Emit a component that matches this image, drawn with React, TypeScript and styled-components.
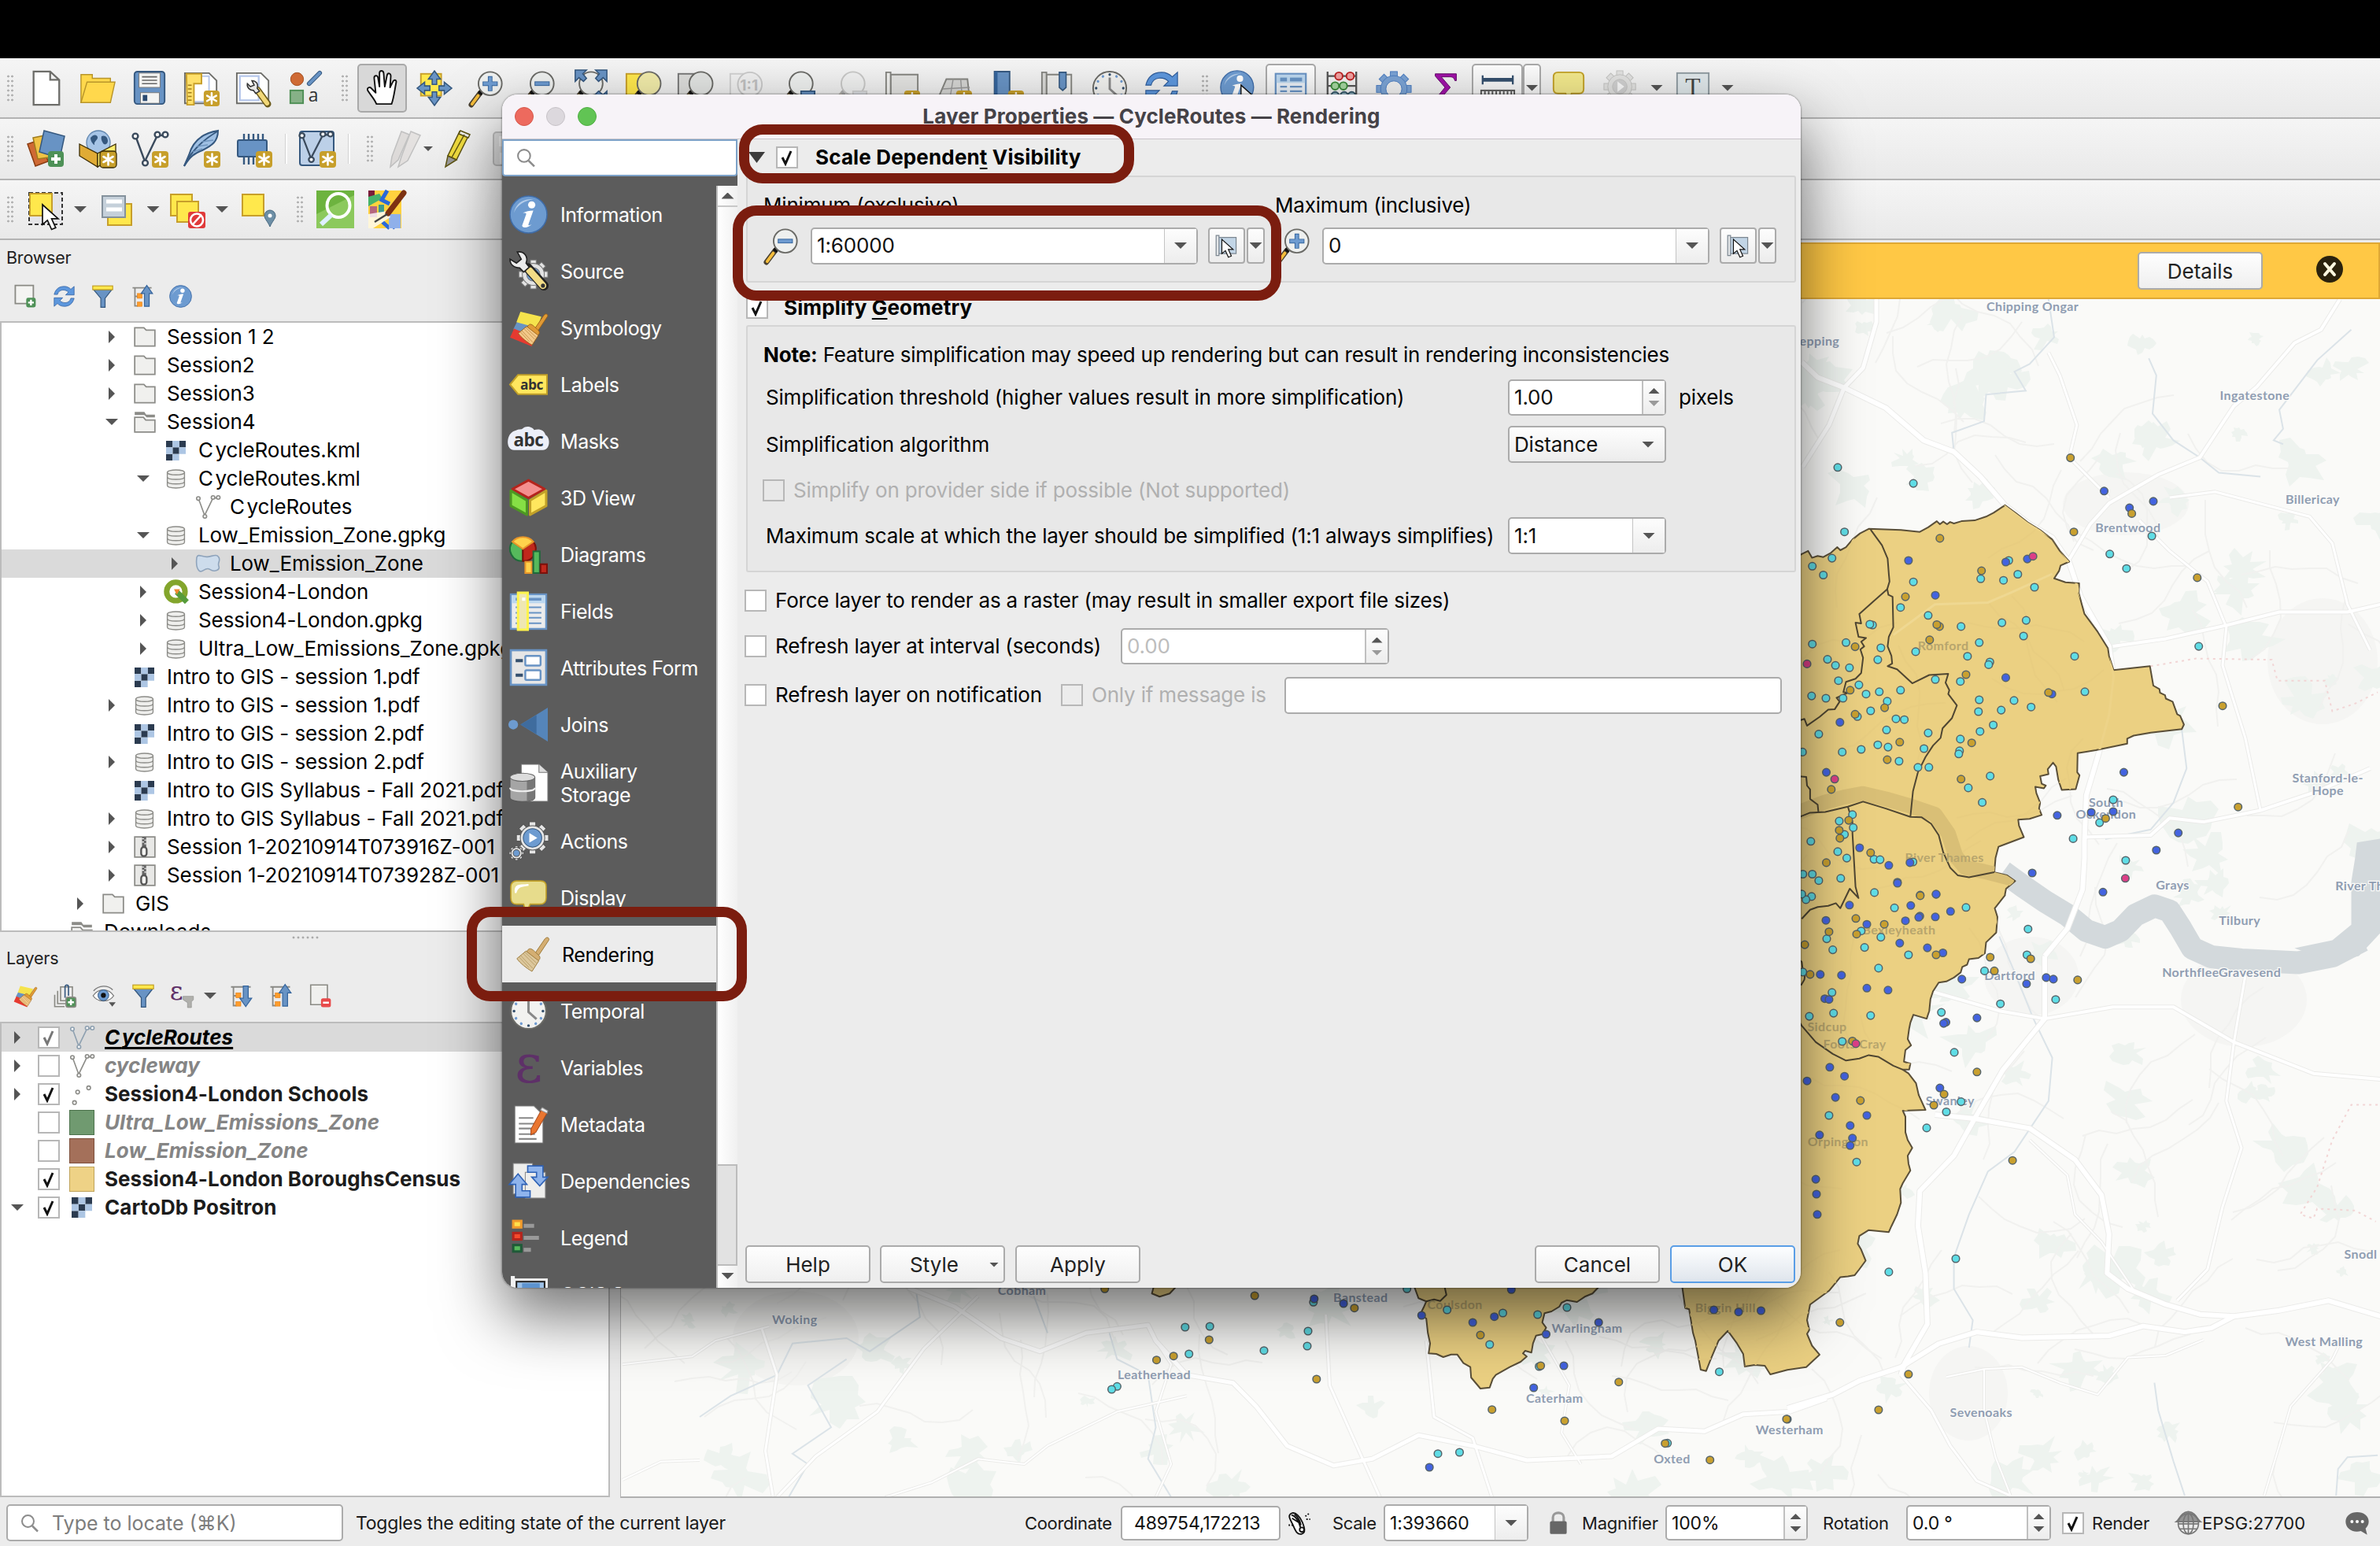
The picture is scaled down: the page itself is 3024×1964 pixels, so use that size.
import React from 'react';
import styled, { createGlobalStyle, css } from 'styled-components';

const Global = createGlobalStyle`
  html, body { margin: 0; padding: 0; background: #ececec; }
  * { box-sizing: border-box; }
  svg { display: block; flex: none; }
`;

const FONT = `Inter, "Liberation Sans", sans-serif`;

/* ------------------------------------------------------------------ */
/* Icons, all drawn on a 48 x 48 grid                                   */
/* ------------------------------------------------------------------ */

const Star = () => (
  <g>
    <rect x="27" y="27" width="21" height="21" rx="4" fill="#c79f2b" />
    <g stroke="#fff" strokeWidth="2.6" strokeLinecap="round">
      <path d="M37.5 30.5v14M31.4 34l12.2 7M31.4 41l12.2-7" />
    </g>
  </g>
);
const Plus = () => (
  <g>
    <rect x="27" y="27" width="20" height="20" rx="4" fill="#4e9157" />
    <path d="M37 31v12M31 37h12" stroke="#fff" strokeWidth="4" />
  </g>
);
const Lens = ({ fill = '#eef0ef', x = 0 }: { fill?: string; x?: number }) => (
  <g transform={`translate(${x} 0)`}>
    <path d="M16 30 4 46" stroke="#4b4130" strokeWidth="7" strokeLinecap="round" />
    <path d="M13 34 5 45" stroke="#f5bd3b" strokeWidth="4" strokeLinecap="round" />
    <path d="m19 26-4 6" stroke="#111" strokeWidth="6" />
    <circle cx="29" cy="18" r="15.5" fill={fill} stroke="#6a6a66" strokeWidth="2" />
  </g>
);
const Brush = ({ handle = '#e09a35', hair = '#f3c98a', line = '#9a5f14' }) => (
  <g stroke={line} strokeWidth="1">
    <path d="M29 23 42 4c3-4 7-1 5 2L33 27z" fill={handle} />
    <path d="M20 18c3-3 7 1 10 4s7 5 5 9l-3 3-15-12z" fill={handle} />
    <path d="m17 20 17 13-9 14C18 43 9 36 5 30z" fill={hair} />
    <path d="m13 23 16 16M10 26l16 17M8 28l13 14M15 21l16 15" fill="none" strokeOpacity=".55" />
  </g>
);
const Gear = ({ cx, cy, r, fill, stroke, inner }: { cx: number; cy: number; r: number; fill: string; stroke: string; inner: string }) => (
  <g transform={`translate(${cx} ${cy})`}>
    {Array.from({ length: 8 }, (_, i) => (
      <rect key={i} x={-r * 0.2} y={-r} width={r * 0.4} height={r * 0.5} fill={fill} stroke={stroke} transform={`rotate(${i * 45})`} />
    ))}
    <circle r={r * 0.76} fill={fill} stroke={stroke} />
    <circle r={r * 0.7} fill={fill} />
    <circle r={r * 0.46} fill={inner} stroke={stroke} />
  </g>
);
const Clock = () => (
  <g>
    <circle cx="24" cy="24" r="22" fill="#f2f2f0" stroke="#6a6a66" strokeWidth="2" />
    {Array.from({ length: 12 }, (_, i) => (
      <circle key={i} cx="24" cy="6" r="1.7" fill={i % 3 ? '#6f9bd1' : '#35506e'} transform={`rotate(${i * 30} 24 24)`} />
    ))}
    <path d="M24 10v15l10 9" fill="none" stroke="#888" strokeWidth="3" />
  </g>
);
const Info = () => (
  <g>
    <circle cx="24" cy="24" r="23" fill="#6d9bd0" stroke="#3f6ca8" strokeWidth="1.5" />
    <path d="M6 22C8 10 18 4 30 5 18 7 9 13 6 22z" fill="#b4cdea" />
    <circle cx="28" cy="12" r="4.5" fill="#fff" />
    <path d="M17 22c4-2 8-3 13-3l-6 17c-.6 2 1 2 4 0-3 4-11 6-12 2l5-14c.6-2-1-2-4-2z" fill="#fff" />
  </g>
);
const Refresh = () => (
  <g fill="#5d97dd" stroke="#2f5d9c" strokeWidth="1.2">
    <path d="M3 20C6 8 14 3 24 3c7 0 11 3 14 6l7-6v18H27l6-6c-6-6-20-7-23 5z" />
    <path d="M45 28C42 40 34 45 24 45c-7 0-11-3-14-6l-7 6V27h18l-6 6c6 6 20 7 23-5z" />
  </g>
);
const Cursor = ({ x = 0, y = 0, s = 1 }) => (
  <path transform={`translate(${x} ${y}) scale(${s})`} d="M0 0v24l6-5 5 11 5-2-5-11h8z" fill="#fff" stroke="#111" strokeWidth="1.6" />
);
const Poly = ({ c }: { c: string }) => (
  <g fill="none" stroke={c} strokeWidth="2.4">
    <path d="M7 10 18 40 34 7h8" />
    <g fill="#f6f6f6">
      <circle cx="6" cy="8" r="3.4" /><circle cx="18.5" cy="42" r="3.4" /><circle cx="34" cy="6" r="3.4" /><circle cx="44" cy="6" r="3.4" />
    </g>
  </g>
);
const Tree2 = () => (
  <g>
    <path d="M4 6h40M9 6v38h6M9 24h8" stroke="#8a8a86" strokeWidth="3" fill="none" />
    <rect x="14" y="18" width="10" height="10" fill="#ff9d2b" stroke="#e07a12" /><rect x="14" y="36" width="10" height="9" fill="#ff9d2b" stroke="#e07a12" />
  </g>
);
const Arrow = ({ d, c = '#35659d' }: { d: string; c?: string }) => <path d={d} fill="#6893c4" stroke={c} strokeWidth="2" />;
const Map2 = () => (
  <g>
    <path d="M6 6h38v34H6z" fill="#c2d5e6" stroke="#7c8791" strokeWidth="2" />
    <path d="M2 2h6v42H2z" fill="#e3e6e8" stroke="#7c8791" strokeWidth="2" />
  </g>
);

const GLYPHS: Record<string, React.ReactNode> = {
  doc: <path d="M8 2h22l12 11v33H8zM30 2v11h12" fill="#fff" stroke="#6d6d69" strokeWidth="2.4" />,
  folderOpen: (
    <g fill="#ffd84c" stroke="#b8952a" strokeWidth="1.5"><path d="M2 6h15v5h24v32H2z" /><path d="M10 16h37l-6 27H2z" /></g>
  ),
  save: (
    <g>
      <rect x="4" y="2" width="40" height="43" rx="4" fill="#6893c4" stroke="#35587f" strokeWidth="2" />
      <rect x="10" y="4" width="28" height="19" fill="#f4f4f2" stroke="#777" /><path d="M14 9h20M14 13.5h20M14 18h20" stroke="#666" strokeWidth="1.6" />
      <rect x="12" y="30" width="25" height="14" fill="#f4f4f2" stroke="#777" /><rect x="15" y="33" width="6" height="8" fill="#2a4a70" />
    </g>
  ),
  layoutNew: (
    <g>
      <path d="M2 4h32l10 10v30H2z" fill="#fff" stroke="#6d6d69" strokeWidth="2" />
      <path d="M20 8h14v34H14" fill="none" stroke="#b5c6ea" strokeWidth="2" />
      <path d="M4 5h20v13H14v28H5z" fill="#ffe06a" stroke="#c79f2b" strokeWidth="2" />
      <path d="M6 20h5M6 25h5M6 30h5M6 35h5M6 40h5" stroke="#a07c1c" strokeWidth="1.6" />
      <Star />
    </g>
  ),
  layoutMgr: (
    <g>
      <path d="M2 4h32l10 10v30H2z" fill="#fff" stroke="#6d6d69" strokeWidth="2" />
      <path d="M6 8h25v32H6z" fill="none" stroke="#b5c6ea" strokeWidth="2.4" />
      <path d="m29 26 14 19" stroke="#6b5a1a" strokeWidth="9" strokeLinecap="round" /><path d="m29 26 13 18" stroke="#f2d878" strokeWidth="6" strokeLinecap="round" />
      <path d="M22 14c5 0 9 4 7 10l3 4-5 3-3-4c-5 0-9-4-8-9l4 4 5-2z" fill="#e6e6e6" stroke="#333" strokeWidth="1.6" />
    </g>
  ),
  styleMgr: (
    <g>
      <circle cx="13" cy="12" r="8.5" fill="#cf6a34" stroke="#a04a1c" /><path d="M43 4 29 18" stroke="#35587f" strokeWidth="6" strokeLinecap="round" /><path d="M43 4 29 18" stroke="#6893c4" strokeWidth="4" strokeLinecap="round" />
      <rect x="4" y="27" width="17" height="17" fill="#86b187" stroke="#4e8f55" strokeWidth="2" />
      <text x="28" y="42" fontFamily="Open Sans" fontSize="24" fill="#333">a</text>
    </g>
  ),
  hand: (
    <path d="M16 45C13 38 8 33 5 28c-3-4 2-7 5-3l5 5-2-19c-.5-4 4-5 5-1l2 12V4c0-4 5-4 5.5 0L27 22l3-15c1-4 5-3 5 1l-1 15 4-8c2-3 5-2 4 2-2 10-3 20-6 28z" fill="#fff" stroke="#111" strokeWidth="2" strokeLinejoin="round" />
  ),
  panSel: (
    <g><rect x="6" y="5" width="27" height="29" fill="#ffe84c" stroke="#c79f2b" strokeWidth="2" />
      <g fill="#6893c4" stroke="#35587f" strokeWidth="1.6">
        <path d="m24 1 8 11h-5v7h-6v-7h-5zM24 47l8-11h-5v-7h-6v7h-5zM1 24l10-8v5h7v6h-7v5zM47 24l-10-8v5h-7v6h7v5z" />
      </g></g>
  ),
  zoomIn: <g><Lens /><path d="M29 8v20M19 18h20" stroke="#35659d" strokeWidth="6" /><path d="M29 9v18M20 18h18" stroke="#6d9bd0" strokeWidth="4" /></g>,
  zoomOut: <g><Lens /><path d="M19 18h20" stroke="#35659d" strokeWidth="6" /><path d="M20 18h18" stroke="#6d9bd0" strokeWidth="4" /></g>,
  zoomFull: (
    <g><Lens x={-4} /><g fill="#6893c4" stroke="#35587f" strokeWidth="1.6"><path d="M4 0h15l-5 5 5 6-4 4-6-5-5 5zM46 0H31l5 5-5 6 4 4 6-5 5 5zM46 44V28l-5 5-6-5-4 4 5 6-5 6z" /></g></g>
  ),
  zoomSel: <g><rect x="3" y="5" width="24" height="34" fill="#ffe84c" stroke="#c79f2b" strokeWidth="2" /><Lens fill="#f1eba9" x={4} /></g>,
  zoomLayer: <g><rect x="3" y="5" width="24" height="34" fill="#dcdcda" stroke="#777" strokeWidth="2" /><Lens fill="#e2e4e2" x={4} /></g>,
  zoom11: (
    <g opacity=".45"><rect x="3" y="5" width="30" height="30" fill="none" stroke="#aaa" strokeWidth="2" /><circle cx="29" cy="19" r="16" fill="#eee" stroke="#999" strokeWidth="2" /><text x="16" y="27" fontFamily="Inter" fontWeight="700" fontSize="20" fill="#888">1:1</text></g>
  ),
  zoomLast: <g><Lens x={-1} /><path d="M28 28h18v14H28z" fill="#6893c4" stroke="#35587f" strokeWidth="2" /></g>,
  zoomNext: <g opacity=".3"><Lens x={-1} /><path d="M28 28h18v14H28z" fill="#b5c0cc" stroke="#888" strokeWidth="2" /></g>,
  mapNew: <g><path d="M9 6h36v34H9z" fill="#e3e3e1" stroke="#858580" strokeWidth="2" /><path d="M3 3h6v40H3z" fill="#f0f0ee" stroke="#858580" strokeWidth="2" /><Star /></g>,
  map3d: <g><path d="M14 12h28l3 28-20-6-23 6z" fill="#d5d5d3" stroke="#858580" strokeWidth="2" /><path d="m9 25 36-2M23 12l-4 24M33 12l2 24" stroke="#999" strokeWidth="1.5" /><Star /></g>,
  bookmark: <g><path d="M9 2h20v40H9z" fill="#6893c4" stroke="#35587f" strokeWidth="2" /><path d="M9 2h4v40H9z" fill="#35659d" /><Star /></g>,
  bookmarks: <g><path d="M9 6h33v34H9z" fill="#ededeb" stroke="#858580" strokeWidth="2" /><path d="M3 3h6v40H3z" fill="#d9d9d7" stroke="#858580" strokeWidth="2" /><path d="M26 3h9v20l-4.5 4-4.5-4z" fill="#6893c4" stroke="#35587f" strokeWidth="1.6" /></g>,
  clock: <Clock />,
  refresh: <Refresh />,
  info: <Info />,
  identify: <g><g transform="scale(.95)"><Info /></g><Cursor x={28} y={20} s={0.9} /></g>,
  table: (
    <g><rect x="4" y="5" width="40" height="40" fill="#e8eef5" stroke="#6893c4" strokeWidth="2.4" /><rect x="5" y="6" width="38" height="11" fill="#bcd7ef" /><rect x="10" y="10" width="9" height="5" fill="#6893c4" /><rect x="23" y="10" width="16" height="5" fill="#6893c4" />
      <path d="M10 22h9M23 22h16M10 28h9M23 28h16M10 34h9M23 34h16M10 40h9M23 40h16" stroke="#6893c4" strokeWidth="2.4" /></g>
  ),
  abacus: (
    <g fill="none" strokeWidth="2"><path d="M5 2v44M43 2v44M5 8h38M5 21h38M5 34h38" stroke="#555" strokeWidth="2.4" />
      <g fill="#f2a0a0" stroke="#b22"><circle cx="20" cy="8" r="5" /><circle cx="35" cy="8" r="5" /></g><g fill="#a5d6a0" stroke="#3a8a3a"><circle cx="15" cy="21" r="5" /><circle cx="26" cy="21" r="5" /></g><g fill="#9bc" stroke="#356"><circle cx="15" cy="34" r="5" /><circle cx="27" cy="34" r="5" /><circle cx="37" cy="34" r="5" /></g></g>
  ),
  gearBlue: <Gear cx={24} cy={25} r={23} fill="#7ba3d4" stroke="#4a7cc0" inner="#f0f0f0" />,
  gearGray: <g opacity=".6"><Gear cx={22} cy={22} r={21} fill="#d8d8d6" stroke="#a5a5a2" inner="#bbb" /><path d="m19 15 9 7-9 7z" fill="#fff" /></g>,
  sigma: <path d="M10 5h28v9h-2c-1-4-3-5-7-5H18l12 14-13 15h15c4 0 5-2 6-5h2l-2 11H9v-4l14-17L10 8z" fill="#a012a8" stroke="#600a66" strokeWidth="1" />,
  ruler: <g><path d="M4 13h40" stroke="#35506e" strokeWidth="5" /><path d="M4 7v12M44 7v12" stroke="#35506e" strokeWidth="2.4" /><rect x="2" y="27" width="44" height="15" fill="#eee" stroke="#555" strokeWidth="2" /><path d="M7 28v8M12 28v8M17 28v8M22 28v8M27 28v8M32 28v8M37 28v8M42 28v8" stroke="#555" strokeWidth="2" /></g>,
  bubble: <path d="M10 3h28c4 0 6 2 6 6v16c0 4-2 6-6 6H28l-4 12-4-12H10c-4 0-6-2-6-6V9c0-4 2-6 6-6z" fill="#f2e88c" stroke="#c2a128" strokeWidth="2" />,
  textBox: <g><rect x="3" y="4" width="42" height="40" fill="#dfe7ea" stroke="#8e9aa0" strokeWidth="2" /><text x="24" y="33" textAnchor="middle" fontFamily="Liberation Serif" fontSize="33" fill="#444">T</text></g>,
  dsm: (
    <g strokeWidth="1.5"><path d="m1 18 18-6 8 28-16 6z" fill="#cf6a34" stroke="#8a3c12" /><path d="m8 10 20-4 6 28-20 3z" fill="#f0c345" stroke="#a07c1c" /><path d="m22 1 26 7-6 28-26-8z" fill="#6893c4" stroke="#35587f" /><Plus /></g>
  ),
  gpkgNew: (
    <g stroke="#3a2c05" strokeWidth="1.3"><circle cx="25" cy="16" r="15" fill="#a6c4e6" stroke="#5f84ad" /><path d="M15 10c4-5 8-4 9-1s-5 6-4 9-5-2-5-8zM29 8c5-2 8 2 8 6s-4 6-6 3-3-6-2-9z" fill="#35587f" stroke="none" /><path d="m1 18 23 12v17L1 33z" fill="#e0ab35" /><path d="m47 18-23 12v17l23-14z" fill="#ffee6e" /><Star /></g>
  ),
  shpNew: <g><Poly c="#3a4a5c" /><Star /></g>,
  feather: <g><path d="M45 1C25 4 13 14 8 32L2 46c8-13 13-16 23-20C37 20 45 15 45 1z" fill="#9fc0e4" stroke="#35587f" strokeWidth="2" /><path d="M2 46C10 28 24 14 44 2" fill="none" stroke="#35587f" strokeWidth="2" /><path d="m13 28 12-4M18 21l14-2M25 15l14-2" stroke="#6f94bd" strokeWidth="1.5" /><Star /></g>,
  chip: <g><path d="M12 5v39M18 5v39M24 5v39M30 5v39M36 5v39" stroke="#35587f" strokeWidth="2.4" /><rect x="4" y="13" width="37" height="21" rx="2" fill="#6893c4" stroke="#35587f" strokeWidth="2" /><Star /></g>,
  virtual: <g><rect x="2" y="2" width="43" height="43" rx="3" fill="#bcd0e8" stroke="#35587f" strokeWidth="2" /><g transform="translate(-1 0) scale(.95 .9)"><Poly c="#3a4a5c" /></g><Star /></g>,
  pencils: <g opacity=".45" stroke="#888" strokeWidth="1.5"><path d="m20 2 10 4L16 38 6 47l2-13z" fill="#c9c3c0" /><path d="m32 2 12 5-16 32-12 8 4-13z" fill="#d6d0cd" /></g>,
  pencil: <g stroke="#5d5312" strokeWidth="1.5"><path d="m28 2 12 4-16 32-11-5z" fill="#f0dc3e" /><path d="M13 33 24 38 10 47z" fill="#9a9a9a" /><path d="m29 1 12 5-2 4-12-5z" fill="#eee" /><path d="M34 6 18 35" fill="none" /></g>,
  saveGray: <g opacity=".5"><rect x="4" y="3" width="40" height="42" rx="4" fill="#c8c8c8" stroke="#888" strokeWidth="2" /><rect x="11" y="8" width="24" height="13" fill="#eee" /><rect x="12" y="29" width="24" height="14" fill="#eee" /></g>,
  select: <g><rect x="2" y="3" width="42" height="40" fill="#e5e5e8" stroke="#333" strokeWidth="2" strokeDasharray="5 3" /><rect x="3" y="4" width="28" height="28" fill="#ffe84c" stroke="#c79f2b" strokeWidth="2" /><Cursor x={19} y={18} s={1.05} /></g>,
  selForm: <g><rect x="12" y="17" width="30" height="27" fill="#ffe84c" stroke="#c79f2b" strokeWidth="2" /><rect x="5" y="7" width="29" height="27" fill="#c5d0da" stroke="#84919c" strokeWidth="2" /><path d="M10 14h20M10 24h20" stroke="#fff" strokeWidth="5" /></g>,
  deselect: <g><rect x="3" y="5" width="27" height="27" fill="#ffe84c" stroke="#c79f2b" strokeWidth="2" /><rect x="11" y="14" width="27" height="26" fill="#ffe84c" stroke="#c79f2b" strokeWidth="2" /><rect x="25" y="27" width="22" height="21" rx="3" fill="#e03a3a" /><circle cx="36" cy="37.5" r="8" fill="#e03a3a" stroke="#fff" strokeWidth="2.6" /><path d="m31 43 10-11" stroke="#fff" strokeWidth="2.6" /></g>,
  selLoc: <g><rect x="4" y="5" width="27" height="27" fill="#ffe84c" stroke="#c79f2b" strokeWidth="2" /><path d="M39 46c-3-7-7-10-7-14a7 7 0 0 1 14 0c0 4-4 7-7 14z" fill="#6d8fa6" stroke="#45667e" /><circle cx="39" cy="32" r="2.5" fill="#fff" /></g>,
  greenLens: <g><rect width="48" height="48" fill="#6db33f" /><path d="M0 48V30L48 6v42z" fill="#8cc95d" /><ellipse cx="28" cy="19" rx="14.5" ry="15" fill="none" stroke="#fff" strokeWidth="4" /><path d="M19 31 6 43" stroke="#dff0ff" strokeWidth="6" /></g>,
  osm: (
    <g><rect width="42" height="48" fill="#ffd23e" /><path d="M0 0h8v14L0 20z" fill="#7a1b3a" /><path d="m0 8 14-4 4 6L0 20z" fill="#47b36a" /><path d="M2 20h9v14H2z" fill="#b5677e" /><path d="M13 18h7v10h-7z" fill="#3f9a8c" /><path d="M24 0 17 12l10 5M18 40l9 8M28 40l6 8" fill="none" stroke="#2a69d8" strokeWidth="5" /><rect x="26" y="30" width="15" height="18" fill="#8fb0ea" /><path d="m0 30 24-4 4 8L6 48H0z" fill="#fff" opacity=".8" /><path d="M45 3 25 29" stroke="#7d3212" strokeWidth="7" strokeLinecap="round" /><path d="M24 30 8 40" stroke="#444" strokeWidth="2.4" /></g>
  ),
  addDoc: <g><path d="M4 1h38v38H4z" fill="#f4f4f2" stroke="#8a8a84" strokeWidth="3" /><Plus /></g>,
  filter: <g><path d="M5 10h38L29 28v19h-9V28z" fill="#6893c4" stroke="#35587f" strokeWidth="2" /><rect x="3" y="2" width="42" height="8" fill="#ffe84c" stroke="#c2a128" strokeWidth="2" /></g>,
  collapse: <g><Tree2 /><Arrow d="M34 1 46 18h-7v27h-10V18h-7z" /></g>,
  expand: <g><Tree2 /><Arrow d="M34 46 46 29h-7V4h-10v25h-7z" /></g>,
  styling: <g><path d="M5 26 10 16 36 24 30 34z" fill="#6893c4" /><path d="M14 4 40 10 35 24 9 17z" fill="#f5e34c" /><path d="m1 36 5-11 24 10-2 12z" fill="#e63a30" /><g transform="translate(7 5) scale(.86)"><Brush /></g></g>,
  addGroup: <g fill="none" stroke="#8a8a84" strokeWidth="2.6"><path d="M4 22v24h20" /><path d="M10 14v26h18" /><rect x="16" y="6" width="24" height="28" /><path d="M25 28V6c0-5 7-5 7 0v18" stroke="#35587f" /><Plus /></g>,
  eye: <g><path d="M2 24c10-16 32-16 42 0-10 14-32 14-42 0z" fill="#fff" stroke="#777" strokeWidth="2" /><circle cx="23" cy="23" r="11" fill="#6d9bd0" stroke="#35587f" strokeWidth="1.5" /><circle cx="23" cy="23" r="5" fill="#111" /><path d="M3 14C14 2 32 2 42 12" fill="none" stroke="#777" strokeWidth="2" /><path d="M34 37h14l-7 9z" fill="#555" /></g>,
  epsFilter: <g><text x="-2" y="32" fontFamily="DejaVu Serif" fontSize="52" fill="#5e3068">ε</text><path d="M25 25h21v7l-4 4v12h-8V38l-9-6z" fill="#b0b0ac" stroke="#8a8a86" /></g>,
  remove: <g><path d="M6 2h34v40H6z" fill="#f0f0ee" stroke="#8a8a84" strokeWidth="2.6" /><rect x="27" y="29" width="20" height="18" rx="4" fill="#e84a4a" /><path d="M31 38h12" stroke="#fff" strokeWidth="4" /></g>,
  folder: <path d="M2 4h20l5 5h19v35H2z" fill="#f0f0ee" stroke="#8c8c88" strokeWidth="3" />,
  folderO: <g><path d="M2 2h21l4 6h19v6H28l-5-5H2z" fill="#8c8c88" /><path d="M2 14h19l5 6h20v26H2z" fill="#f0f0ee" stroke="#8c8c88" strokeWidth="3" /></g>,
  raster: <g><rect width="48" height="48" fill="#fff" /><path d="M0 0h16v16H0zM32 0h16v16H32zM16 16h16v16H16zM0 32h16v16H0z" fill="#2b3b50" /><path d="M16 0h16v16H16zM0 16h16v16H0zM32 16h16v16H32zM16 32h16v16H16z" fill="#adc6e4" /></g>,
  db: <g fill="#eeeeec" stroke="#8c8c88" strokeWidth="2.6"><path d="M3 8v32c0 8 42 8 42 0V8z" /><ellipse cx="24" cy="8" rx="21" ry="6" /><path d="M3 19c0 8 42 8 42 0M3 30c0 8 42 8 42 0" fill="none" /></g>,
  poly: <Poly c="#8c8c88" />,
  polyBlue: <Poly c="#8ea0b0" />,
  area: <path d="M3 12c3-8 10 0 20-1s18-6 22 1-3 10 0 17-8 12-17 6-14 8-20 3S2 20 3 12z" fill="#cddcec" stroke="#8ea3bb" strokeWidth="2.4" />,
  points: <g fill="none" stroke="#8c8c88" strokeWidth="2.4"><circle cx="10" cy="40" r="3.5" /><circle cx="16" cy="20" r="3.5" /><circle cx="37" cy="12" r="3.5" /></g>,
  qgis: <g><circle cx="23" cy="23" r="20" fill="none" stroke="#83a52c" strokeWidth="12" /><path d="m25 24 22 22" stroke="#569b3a" strokeWidth="12" /><path d="M19 18h13l-7 12z" fill="#f08a30" /></g>,
  zip: <g><rect x="2" y="2" width="44" height="44" fill="#e8e8e6" stroke="#8c8c88" strokeWidth="3" /><path d="M18 2h9v22h-9z" fill="#666" /><path d="M18 6h4M23 9h4M18 13h4M23 17h4" stroke="#fff" strokeWidth="2" /><rect x="16" y="24" width="12" height="20" rx="6" fill="#f4f4f2" stroke="#555" strokeWidth="4" /></g>,
  source: (
    <g><Gear cx={30} cy={28} r={18} fill="#e3e3e3" stroke="#777" inner="#6d9bd0" /><path d="m23 20 20 22" stroke="#222" strokeWidth="12" strokeLinecap="round" /><path d="m25 23 17 19" stroke="#f2dc86" strokeWidth="8.5" strokeLinecap="round" /><circle cx="42" cy="42" r="2.5" fill="#333" />
      <path d="M10 0c9-1 14 6 11 14l4 5-7 6-5-5C6 20 1 16 1 9l8 5 6-5z" fill="#ececec" stroke="#222" strokeWidth="1.6" /></g>
  ),
  labels: <g><path d="m1 24 10-12h36v24H11z" fill="#ffe75e" stroke="#c2a128" strokeWidth="2" /><text x="28" y="30" textAnchor="middle" fontFamily="Open Sans" fontWeight="700" fontSize="17" fill="#333">abc</text></g>,
  masks: <g><path d="M7 11c6-3 8-1 10-3 4-4 12-2 14 2 6-2 13 0 14 6 7 4 6 19-3 19H6C-5 35-4 14 7 11z" fill="#eceff9" /><text x="24" y="30" textAnchor="middle" fontFamily="Open Sans" fontWeight="700" fontSize="22" fill="#333">abc</text></g>,
  cube: <g strokeWidth="3" strokeLinejoin="round"><path d="m24 2 20 11-20 11L4 13z" fill="#f58f8f" stroke="#b5241c" /><path d="m2 15 20 12v18L2 34z" fill="#86df45" stroke="#4d9722" /><path d="M46 15 26 27v18l20-11z" fill="#ffe75e" stroke="#c2a128" /></g>,
  diagrams: <g strokeWidth="2"><path d="M17 17 4 8a15 15 0 0 0 13 24z" fill="#56b95c" stroke="#1f6a3a" /><path d="M17 17 30 8a15 15 0 0 1-13 24z" fill="#c0281c" stroke="#7a120c" /><path d="M17 17 4 8a16 14 0 0 1 26 0z" fill="#ffd24c" stroke="#e8962a" /><rect x="20" y="33" width="8" height="14" fill="#ffd24c" stroke="#e8962a" /><rect x="30" y="20" width="8" height="27" fill="#56b95c" stroke="#1f6a3a" /><rect x="39" y="36" width="8" height="11" fill="#c0281c" stroke="#7a120c" /></g>,
  fields: <g><rect x="2" y="3" width="44" height="43" fill="#ececec" stroke="#6893c4" strokeWidth="2.4" /><rect x="3" y="4" width="42" height="10" fill="#bcd7ef" /><path d="M8 9h32" stroke="#6893c4" strokeWidth="3.5" /><path d="M8 19h32M8 26h32M8 32h32M8 39h32" stroke="#6893c4" strokeWidth="2" /><rect x="11" y="1" width="12" height="46" fill="#efe7b2" stroke="#fff44c" strokeWidth="3" /><rect x="16" y="7" width="4" height="4" fill="#fff" /></g>,
  form: <g><rect x="2" y="2" width="44" height="43" fill="#e6e6e6" stroke="#6893c4" strokeWidth="2.6" /><path d="M8 15h9M8 33h9" stroke="#35506e" strokeWidth="4" /><g fill="#fff" stroke="#6893c4" strokeWidth="2.4"><rect x="20" y="9" width="19" height="12" rx="1.5" /><rect x="20" y="27" width="19" height="12" rx="1.5" /></g></g>,
  joins: <g><circle cx="5" cy="24" r="6" fill="#6d9bd0" /><path d="M14 24 48 3v42z" fill="#5585ba" /><path d="M14 24 34 12v24z" fill="#3f6c9e" /></g>,
  aux: <g><path d="M15 1h22l11 10v36H15z" fill="#fff" stroke="#777" /><path d="M37 1v10h11" fill="#ddd" stroke="#777" /><path d="M1 18v24c0 7 31 7 31 0V18z" fill="#a5a5a5" stroke="#555" /><path d="M22 18v29c6-1 10-3 10-5V18z" fill="#777" /><ellipse cx="16.5" cy="17" rx="15.5" ry="5" fill="#dcdcdc" stroke="#666" /><path d="M1 30c0 6 31 6 31 0" fill="none" stroke="#eee" strokeWidth="2" /></g>,
  actions: <g><Gear cx={29} cy={20} r={20} fill="#e6e6e6" stroke="#555" inner="#6d9bd0" /><circle cx="29" cy="20" r="11.5" fill="#6d9bd0" stroke="#35587f" /><path d="m25 14 10 6-10 6z" fill="#fff" /><Gear cx={9} cy={39} r={9} fill="#e6e6e6" stroke="#555" inner="#6d9bd0" /></g>,
  display: <g><path d="M9 3h30c5 0 7 3 7 7v14c0 5-3 8-8 8H26l-5 11-3-11H9c-5 0-7-3-7-8V10c0-4 3-7 7-7z" fill="#e7dc8c" stroke="#c2a128" strokeWidth="1.6" /><path d="M8 18C6 8 12 8 24 8c-8 1-14 1-16 10z" fill="#fff" stroke="#fff" strokeWidth="2" /></g>,
  rendering: <Brush handle="#d4ae72" hair="#dcc79c" line="#9c7a3c" />,
  variables: <text x="24" y="42" textAnchor="middle" fontFamily="DejaVu Serif" fontSize="66" fill="#5e3068">ε</text>,
  metadata: <g><path d="M7 1h24l11 11v35H7z" fill="#fff" stroke="#777" /><path d="M12 16h18M12 23h20M12 29h16M12 36h20M12 42h22" stroke="#888" strokeWidth="2" /><path d="m40 6 7 4-14 24-6 3v-7z" fill="#ea7630" stroke="#a8481a" /><path d="m41 3 7 4-1 3-8-4z" fill="#eee" stroke="#999" /></g>,
  deps: <g><path d="M5 2h24v38H5z" fill="#eeeeec" stroke="#888" /><path d="M20 13h25v32H20z" fill="#eeeeec" stroke="#888" /><g fill="#8fb4ec" stroke="#2f62b5" strokeWidth="1.6"><path d="M23 5h19v14h6l-10 11-10-11h6v-6H23z" /><path d="M26 44H8V28H0l11-13 11 13h-6v8h10z" /></g></g>,
  legend: <g><rect x="5" y="3" width="10" height="8" fill="#ffe04c" stroke="#f09a2c" strokeWidth="3" /><rect x="5" y="18" width="10" height="8" fill="#f54a2c" stroke="#b5241c" strokeWidth="3" /><rect x="5" y="33" width="10" height="8" fill="#56b95c" stroke="#1f5a38" strokeWidth="3" /><path d="M18 9h13M18 24h19M18 39h9" stroke="#999" strokeWidth="5" /></g>,
  server: <g><path d="M2 1h5v14H2z" fill="#f2f2f2" /><rect x="6" y="4" width="42" height="40" fill="#eee" /><rect x="9" y="8" width="35" height="30" fill="#9cc0e6" stroke="#222" strokeWidth="2" /><path d="M16 10h22v20H16z" fill="#5d93cf" /></g>,
  mapPick: <g><Map2 /><Cursor x={14} y={10} s={1.25} /></g>,
  mouse: <g stroke="#111" strokeWidth="3" fill="#fff"><path d="M8 4c8-4 18 8 22 18s8 22-2 24S16 38 10 26 0 8 8 4z" /><path d="M8 8c8 0 16 14 18 24M14 6c6 4 12 14 13 22M9 14l16 10" /><circle cx="29" cy="37" r="4.5" /><path d="M2 28h10M36 10l8-6M38 16h8" strokeDasharray="3 3" /></g>,
  lock: <g><path d="M13 22V12c0-12 22-12 22 0v10" fill="none" stroke="#999" strokeWidth="5" /><rect x="7" y="20" width="34" height="26" rx="3" fill="#666" /></g>,
  globe: <g fill="none" stroke="#777" strokeWidth="2.6"><circle cx="24" cy="26" r="20" /><ellipse cx="24" cy="26" rx="10" ry="20" /><path d="M4 26h40M7 36h34M24 4v42" /><path d="M0 22c8-6 8-18 24-20 16 2 16 14 24 20z" fill="#777" fillOpacity=".75" /></g>,
  chat: <g><path d="M24 3c12 0 22 7 22 18 0 6-3 10-6 13l3 12-12-7c-16 4-29-5-29-18C2 10 12 3 24 3z" fill="#666" /><g fill="#fff"><circle cx="14" cy="21" r="3" /><circle cx="24" cy="21" r="3" /><circle cx="34" cy="21" r="3" /></g></g>,
  search: <g fill="none" stroke="#8c8c8c" strokeWidth="4"><circle cx="19" cy="19" r="15" /><path d="m30 31 14 14" strokeWidth="5" /></g>,
};

const Icon = ({ name, size = 48 }: { name: string; size?: number }) => (
  <svg width={size} height={size} viewBox="0 0 48 48" overflow="visible">{GLYPHS[name]}</svg>
);

/* ------------------------------------------------------------------ */
/* Shared controls                                                      */
/* ------------------------------------------------------------------ */

const Page = styled.div`
  position: relative;
  width: 3024px;
  height: 1964px;
  overflow: hidden;
  display: flex;
  flex-direction: column;
  background: #ececec;
  color: #222;
  font: 400 26px/32px ${FONT};
  white-space: nowrap;
`;

const Label = styled.span<{ $w?: number; $ml?: number; $bold?: boolean; $dim?: boolean; $ls?: number; $size?: number }>`
  flex: none;
  width: ${p => (p.$w ? `${p.$w}px` : 'auto')};
  margin-left: ${p => p.$ml ?? 0}px;
  font-weight: ${p => (p.$bold ? 700 : 400)};
  font-size: ${p => p.$size ?? 26}px;
  letter-spacing: ${p => p.$ls ?? (p.$bold ? 0.15 : -0.19)}px;
  color: ${p => (p.$dim ? '#b0b0b0' : 'inherit')};
`;

const Triangle = styled.i<{ $dir: 'down' | 'right' | 'up'; $s?: number; $h?: number; $dim?: boolean }>`
  flex: none;
  width: ${p => (p.$dir === 'right' ? (p.$s ?? 8) : (p.$s ?? 8) * 2)}px;
  height: ${p => p.$h ?? (p.$dir === 'right' ? (p.$s ?? 8) * 2 : p.$s ?? 8)}px;
  background: ${p => (p.$dim ? '#9a9a9a' : p.$h ? '#3c3c3c' : '#555')};
  clip-path: ${p =>
    p.$dir === 'down' ? 'polygon(0 0, 100% 0, 50% 100%)' : p.$dir === 'up' ? 'polygon(0 100%, 100% 100%, 50% 0)' : 'polygon(0 0, 100% 50%, 0 100%)'};
`;

const BoxFrame = styled.span<{ $ml?: number; $dim?: boolean }>`
  flex: none;
  display: flex;
  align-items: center;
  justify-content: center;
  width: 28px;
  height: 28px;
  margin-left: ${p => p.$ml ?? 0}px;
  background: ${p => (p.$dim ? 'transparent' : '#fff')};
  border: 2px solid #b7b7b7;
`;
const Check = ({ on, ml, dim, gray }: { on?: boolean; ml?: number; dim?: boolean; gray?: boolean }) => (
  <BoxFrame $ml={ml} $dim={dim}>
    {on && (
      <svg width="20" height="22" viewBox="0 0 20 22"><path d="m4 11 4 8L15 3" fill="none" stroke={gray ? '#777' : '#111'} strokeWidth="3" /></svg>
    )}
  </BoxFrame>
);

const Field = styled.span<{ $w: number; $h?: number; $ml?: number; $shade?: boolean; $dim?: boolean }>`
  flex: none;
  display: flex;
  align-items: stretch;
  width: ${p => p.$w}px;
  height: ${p => p.$h ?? 47}px;
  margin-left: ${p => p.$ml ?? 0}px;
  border: 2px solid #ababab;
  border-radius: 5px;
  background: ${p => (p.$shade ? 'linear-gradient(#fefefe, #ececec)' : '#fff')};
  color: ${p => (p.$dim ? '#bdbdbd' : '#111')};
`;
const Value = styled.span<{ $pl?: number }>`
  flex: 1;
  display: flex;
  align-items: center;
  padding-left: ${p => p.$pl ?? 6}px;
  letter-spacing: -0.15px;
`;
const Drop = styled.span<{ $w: number; $plain?: boolean }>`
  display: flex;
  align-items: center;
  justify-content: center;
  width: ${p => p.$w}px;
  ${p => !p.$plain && css`
    border-left: 1px solid #c4c4c4;
    background: linear-gradient(#fdfdfd, #ededed);
  `}
`;
const Spin = styled.span`
  display: flex;
  flex-direction: column;
  align-items: center;
  justify-content: center;
  gap: 9px;
  width: 29px;
  border-left: 2px solid #c0c0c0;
  background: linear-gradient(#fdfdfd, #ededed);
`;
const Combo = ({ w, h, ml, text, dropW = 41 }: { w: number; h?: number; ml?: number; text: string; dropW?: number }) => (
  <Field $w={w} $h={h} $ml={ml}><Value>{text}</Value><Drop $w={dropW}><Triangle $dir="down" /></Drop></Field>
);
const SpinBox = ({ w, h, ml, text, dim, floor }: { w: number; h?: number; ml?: number; text: string; dim?: boolean; floor?: boolean }) => (
  <Field $w={w} $h={h} $ml={ml} $dim={dim}>
    <Value>{text}</Value>
    <Spin><Triangle $dir="up" $s={7} /><Triangle $dir="down" $s={7} $dim={floor} /></Spin>
  </Field>
);

const PushButton = styled.span<{ $ml?: number; $primary?: boolean }>`
  flex: none;
  display: flex;
  align-items: center;
  justify-content: center;
  width: 159px;
  height: 48px;
  margin-left: ${p => p.$ml ?? 0}px;
  padding-top: 1px;
  border: 2px solid ${p => (p.$primary ? '#5a9ee6' : '#ababab')};
  border-radius: 5px;
  background: ${p => (p.$primary ? 'linear-gradient(#fdfeff, #dfe5ec)' : 'linear-gradient(#fefefe, #efefef)')};
  color: #222;
`;

/* ------------------------------------------------------------------ */
/* Toolbars                                                             */
/* ------------------------------------------------------------------ */

const Notch = styled.div`flex: none; height: 74px; background: #000;`;
const ToolRow = styled.div<{ $h: number }>`
  flex: none;
  display: flex;
  align-items: center;
  height: ${p => p.$h}px;
  border-bottom: 2px solid #b3b3b3;
  background: linear-gradient(#f5f5f5, #e9e9e9);
`;
const Slot = styled.span<{ $w: number }>`
  flex: none;
  display: flex;
  align-items: center;
  justify-content: center;
  width: ${p => p.$w}px;
`;
const Grip = styled.span`
  flex: none;
  width: 10px;
  height: 36px;
  background: radial-gradient(circle, #b4b4b4 1.3px, transparent 1.7px) 0 0 / 5px 6px;
`;
const Pressed = styled.span<{ $w: number; $dark?: boolean }>`
  flex: none;
  display: flex;
  align-items: center;
  justify-content: center;
  width: ${p => p.$w}px;
  height: 62px;
  border: 2px solid #a9a9a9;
  border-radius: 5px;
  background: ${p => (p.$dark ? '#d8d8d8' : 'linear-gradient(#fdfdfd, #ececec)')};
`;
const Rule = styled.span`flex: none; width: 3px; height: 38px; background: #d2d2d2; border-right: 2px solid #fff;`;

const FILE_TOOLS = ['doc', 'folderOpen', 'save', 'layoutNew', 'layoutMgr', 'styleMgr'];
const NAV_TOOLS = ['panSel', 'zoomIn', 'zoomOut', 'zoomFull', 'zoomSel', 'zoomLayer', 'zoom11', 'zoomLast', 'zoomNext', 'mapNew', 'map3d', 'bookmark', 'bookmarks', 'clock', 'refresh'];
const LAYER_TOOLS = ['dsm', 'gpkgNew', 'shpNew', 'feather', 'chip'];

const TopBars = () => (
  <>
    <ToolRow $h={77}>
      <Slot $w={25}><Grip /></Slot>
      {FILE_TOOLS.map(n => <Slot key={n} $w={66}><Icon name={n} size={46} /></Slot>)}
      <Slot $w={33}><Grip /></Slot>
      <Pressed $w={63} $dark><Icon name="hand" size={46} /></Pressed>
      <Slot $w={2} />
      {NAV_TOOLS.map(n => <Slot key={n} $w={66}><Icon name={n} size={46} /></Slot>)}
      <Slot $w={43}><Grip /></Slot>
      <Slot $w={42}><Icon name="identify" size={46} /></Slot>
      <Slot $w={14} />
      <Pressed $w={64}><Icon name="table" size={46} /></Pressed>
      <Slot $w={66}><Icon name="abacus" size={46} /></Slot>
      <Slot $w={66}><Icon name="gearBlue" size={46} /></Slot>
      <Slot $w={66}><Icon name="sigma" size={46} /></Slot>
      <Pressed $w={65}><Icon name="ruler" size={46} /></Pressed>
      <Pressed $w={23}><Triangle $dir="down" $s={8} /></Pressed>
      <Slot $w={70}><Icon name="bubble" size={46} /></Slot>
      <Slot $w={64}><Icon name="gearGray" size={46} /></Slot>
      <Slot $w={26}><Triangle $dir="down" $s={8} /></Slot>
      <Slot $w={66}><Icon name="textBox" size={46} /></Slot>
      <Slot $w={22}><Triangle $dir="down" $s={8} /></Slot>
    </ToolRow>
    <ToolRow $h={78}>
      <Slot $w={25}><Grip /></Slot>
      {LAYER_TOOLS.map(n => <Slot key={n} $w={66}><Icon name={n} /></Slot>)}
      <Slot $w={16}><Rule /></Slot>
      <Slot $w={64}><Icon name="virtual" /></Slot>
      <Slot $w={16}><Rule /></Slot>
      <Slot $w={38}><Grip /></Slot>
      <Slot $w={50}><Icon name="pencils" /></Slot>
      <Slot $w={10}><Triangle $dir="down" $s={6} /></Slot>
      <Slot $w={62}><Icon name="pencil" /></Slot>
      <Slot $w={72}><Icon name="saveGray" /></Slot>
    </ToolRow>
    <ToolRow $h={76}>
      <Slot $w={25}><Grip /></Slot>
      <Slot $w={67}><Icon name="select" /></Slot>
      <Slot $w={20}><Triangle $dir="down" /></Slot>
      <Slot $w={74}><Icon name="selForm" /></Slot>
      <Slot $w={17}><Triangle $dir="down" /></Slot>
      <Slot $w={69}><Icon name="deselect" /></Slot>
      <Slot $w={20}><Triangle $dir="down" /></Slot>
      <Slot $w={72}><Icon name="selLoc" /></Slot>
      <Slot $w={34}><Grip /></Slot>
      <Slot $w={56}><Icon name="greenLens" /></Slot>
      <Slot $w={76}><Icon name="osm" /></Slot>
    </ToolRow>
  </>
);

/* ------------------------------------------------------------------ */
/* Docks                                                                */
/* ------------------------------------------------------------------ */

const Main = styled.div`flex: none; display: flex; height: 1598px;`;
const Dock = styled.div`flex: none; display: flex; flex-direction: column; width: 775px;`;
const DockTitle = styled.div<{ $h: number }>`
  flex: none;
  display: flex;
  align-items: center;
  height: ${p => p.$h}px;
  padding-left: 8px;
  font-size: 22px;
  color: #222;
`;
const DockTools = styled.div<{ $h: number }>`
  flex: none;
  display: flex;
  align-items: center;
  height: ${p => p.$h}px;
  padding: 0 0 4px 7px;
`;
const Panel = styled.div<{ $h: number }>`
  flex: none;
  height: ${p => p.$h}px;
  overflow: hidden;
  border: 2px solid #bcbcbc;
  background: #fff;
`;
const TreeRow = styled.div<{ $depth?: number; $on?: boolean }>`
  display: flex;
  align-items: center;
  height: 36px;
  padding-left: ${p => (p.$depth ?? 0) * 40}px;
  background: ${p => (p.$on ? '#dadada' : 'transparent')};
  color: #000;
`;
const Splitter = styled.div`
  flex: none;
  display: flex;
  justify-content: center;
  align-items: center;
  height: 14px;
  &::after {
    content: '';
    width: 36px;
    height: 4px;
    background: radial-gradient(circle, #aaa 1.3px, transparent 1.7px) 0 0 / 6px 4px;
  }
`;

type Node = [depth: number, arrow: '' | 'right' | 'down', icon: string, text: string];
const TREE: Node[] = [
  [2, 'right', 'folder', 'Session 1 2'],
  [2, 'right', 'folder', 'Session2'],
  [2, 'right', 'folder', 'Session3'],
  [2, 'down', 'folderO', 'Session4'],
  [3, '', 'raster', 'CycleRoutes.kml'],
  [3, 'down', 'db', 'CycleRoutes.kml'],
  [4, '', 'poly', 'CycleRoutes'],
  [3, 'down', 'db', 'Low_Emission_Zone.gpkg'],
  [4, 'right', 'area', 'Low_Emission_Zone'],
  [3, 'right', 'qgis', 'Session4-London'],
  [3, 'right', 'db', 'Session4-London.gpkg'],
  [3, 'right', 'db', 'Ultra_Low_Emissions_Zone.gpkg'],
  [2, '', 'raster', 'Intro to GIS - session 1.pdf'],
  [2, 'right', 'db', 'Intro to GIS - session 1.pdf'],
  [2, '', 'raster', 'Intro to GIS - session 2.pdf'],
  [2, 'right', 'db', 'Intro to GIS - session 2.pdf'],
  [2, '', 'raster', 'Intro to GIS Syllabus - Fall 2021.pdf'],
  [2, 'right', 'db', 'Intro to GIS Syllabus - Fall 2021.pdf'],
  [2, 'right', 'zip', 'Session 1-20210914T073916Z-001'],
  [2, 'right', 'zip', 'Session 1-20210914T073928Z-001'],
  [1, 'right', 'folder', 'GIS'],
  [0, '', 'folderO', 'Downloads'],
];

const Cap = styled.span`letter-spacing: 2.5px;`;
const Name = ({ text }: { text: string }) => (text.startsWith('Cy') ? <><Cap>C</Cap>{text.slice(1)}</> : <>{text}</>);

const Swatch = styled.span<{ $c: string; $b: string }>`
  width: 32px;
  height: 32px;
  background: ${p => p.$c};
  border: 1px solid ${p => p.$b};
`;
const LayerName = styled.span<{ $kind: 'active' | 'off' | 'on' }>`
  margin-left: 7px;
  font-weight: 700;
  font-size: 26px;
  letter-spacing: 0.05px;
  font-style: ${p => (p.$kind === 'on' ? 'normal' : 'italic')};
  color: ${p => (p.$kind === 'off' ? '#858585' : p.$kind === 'on' ? '#1c1c1c' : '#000')};
  ${p => p.$kind === 'active' && css`text-decoration: underline; text-decoration-thickness: 3px; text-underline-offset: 3px; text-decoration-skip-ink: none;`}
`;
type Layer = { arrow?: 'right' | 'down'; on: boolean; gray?: boolean; icon?: string; fill?: [string, string]; kind: 'active' | 'off' | 'on'; text: string };
const LAYERS: Layer[] = [
  { arrow: 'right', on: true, gray: true, icon: 'polyBlue', kind: 'active', text: 'CycleRoutes' },
  { arrow: 'right', on: false, icon: 'poly', kind: 'off', text: 'cycleway' },
  { arrow: 'right', on: true, icon: 'points', kind: 'on', text: 'Session4-London Schools' },
  { on: false, fill: ['#709a70', '#4c724c'], kind: 'off', text: 'Ultra_Low_Emissions_Zone' },
  { on: false, fill: ['#a4705a', '#7c4f3c'], kind: 'off', text: 'Low_Emission_Zone' },
  { on: true, fill: ['#eed286', '#bfa35a'], kind: 'on', text: 'Session4-London BoroughsCensus' },
  { arrow: 'down', on: true, icon: 'raster', kind: 'on', text: 'CartoDb Positron' },
];
const iconSize = (n: string) => (n === 'poly' || n === 'area' ? 32 : n === 'raster' || n === 'db' ? 25 : 28);

const Docks = () => (
  <Dock>
    <DockTitle $h={44}><Label $size={21.5} $ls={-0.2}>Browser</Label></DockTitle>
    <DockTools $h={59}>
      {['addDoc', 'refresh', 'filter', 'collapse', 'info'].map(n => <Slot key={n} $w={49.5}><Icon name={n} size={29} /></Slot>)}
    </DockTools>
    <Panel $h={776}>
      {TREE.map(([d, arrow, icon, text], i) => (
        <TreeRow key={i} $depth={d} $on={icon === 'area'}>
          <Slot $w={40} />
          <Slot $w={40}>{arrow && <Triangle $dir={arrow} $s={8} />}</Slot>
          <Slot $w={43}><Icon name={icon} size={iconSize(icon)} /></Slot>
          <Label $ml={7} $ls={-0.1}><Name text={text} /></Label>
        </TreeRow>
      ))}
    </Panel>
    <Splitter />
    <DockTitle $h={38}><Label $size={21.5} $ls={-0.2}>Layers</Label></DockTitle>
    <DockTools $h={62}>
      {['styling', 'addGroup', 'eye', 'filter', 'epsFilter'].map(n => <Slot key={n} $w={50}><Icon name={n} size={30} /></Slot>)}
      <Slot $w={20}><Triangle $dir="down" $s={8} /></Slot>
      <Slot $w={4} />
      {['expand', 'collapse', 'remove'].map(n => <Slot key={n} $w={50}><Icon name={n} size={30} /></Slot>)}
    </DockTools>
    <Panel $h={604}>
      {LAYERS.map(l => (
        <TreeRow key={l.text} $on={l.kind === 'active'}>
          <Slot $w={40}>{l.arrow && <Triangle $dir={l.arrow} $s={8} />}</Slot>
          <Slot $w={40}><Check on={l.on} gray={l.gray} ml={0} /></Slot>
          <Slot $w={44}>{l.fill ? <Swatch $c={l.fill[0]} $b={l.fill[1]} /> : <Icon name={l.icon!} size={l.icon === 'raster' ? 26 : 32} />}</Slot>
          <LayerName $kind={l.kind}><Name text={l.text} /></LayerName>
        </TreeRow>
      ))}
    </Panel>
  </Dock>
);

/* ------------------------------------------------------------------ */
/* Map canvas                                                           */
/* ------------------------------------------------------------------ */

/* Three map sheets, each with its own grid; points are projected to canvas pixels. */
type Sheet = { ox: number; oy: number; kx: number; ky: number };
const N: Sheet = { ox: 2270, oy: 380, kx: 2.0796, ky: 2.063 };
const E: Sheet = { ox: 2270, oy: 1120, kx: 2.0796, ky: 2.0103 };
const S: Sheet = { ox: 780, oy: 1560, kx: 1.0182, ky: 3 };
const project = (s: Sheet, pts: string) =>
  pts.trim().split(/\s+/).map(p => {
    const [x, y] = p.split(',').map(Number);
    return [Math.round((s.ox + x / s.kx) * 10) / 10, Math.round((s.oy + y / s.ky) * 10) / 10] as [number, number];
  });
const str = (...runs: [number, number][][]) => runs.flat().map(p => p.join(',')).join(' ');

const BOROUGHS = str(
  project(N, '0,690 38,668 55,660 65,678 80,673 95,676 115,665 132,650 140,658 155,650 172,630 192,614 215,602 300,605 350,610 372,598 395,582 403,590 412,583 422,590 430,584 440,588 460,582 495,580 525,570 545,560 575,540 605,562 635,585 668,605 700,630 720,660 745,688 722,698 718,712 705,732 735,742 771,745 770,770 778,800 785,825 820,872 847,915 850,935 862,972 958,962 967,1013 983,1022 985,1032 998,1038 1000,1047 1018,1055 1030,1088 1038,1092 1048,1115 1042,1127 960,1136 915,1144 898,1152 898,1165 815,1182 790,1186 767,1190 766,1240 772,1248 762,1284 725,1286 716,1260 710,1225 702,1215 688,1232 690,1245 668,1250 672,1270 683,1275 678,1282 655,1278 658,1295 668,1320 665,1335 672,1352 640,1362 610,1364 612,1380 625,1410 585,1425 558,1435 550,1465 547,1502 580,1510 602,1525 578,1545 575,1560'),
  project(E, '575,35 548,68 555,90 552,130 525,155 522,183 505,195 480,198 475,212 462,218 458,232 440,245 420,255 400,258 385,280 378,300 375,330 368,350 333,340 325,360 322,375 318,402 327,418 312,430 308,460 325,465 322,480 305,480 320,490 340,515 347,545 365,583 305,585 312,600 312,640 318,660 330,680 318,700 320,720 325,738 305,770 298,785 300,820 290,850 275,880 268,895 215,890 190,905 186,925 195,940 207,968 190,990 178,1005 160,1008 140,1010 110,1045 60,1080 52,1120 58,1145 52,1155 65,1185 85,1208 50,1240 0,1247'),
  project(S, '1495,558 1488,525 1475,522 1462,528 1460,480 1452,440 1440,392 1428,430 1418,500 1412,545 1405,540 1398,430 1395,400 1390,310 1385,305 1380,200 1530,0'),
);
const COULSDON = str(project(S, '1030,180 1035,228 1040,268 1050,280 1047,300 1042,330 1050,345 1052,400 1055,440 1053,478 1063,480 1072,492 1082,482 1090,482 1098,515 1107,530 1108,570 1120,612 1132,608 1136,575 1140,560 1158,530 1172,510 1180,490 1175,478 1178,468 1186,475 1188,440 1192,410 1200,405 1205,380 1200,360 1203,325 1212,318 1222,300 1225,285 1232,275 1245,282 1255,262 1265,250 1272,228 1275,180'));
const CHESSINGTON = str(project(S, '697,180 697,228 695,250 705,262 718,250 725,228 725,180'));
const INNER = [
  str(project(N, '220,604 250,645 265,680 268,720 270,740 264,760 267,775 278,780 280,860 268,885 265,910 275,935 277,955 265,962 290,970 330,1007 375,985 425,982 418,1005 428,1025 425,1035 448,1065 435,1098 410,1125 405,1150 385,1170 365,1200 345,1240 332,1290 325,1357')),
  str(project(N, '264,760 190,825 195,850 180,848 188,885 208,888 195,898 203,910 193,918 200,940 195,980 180,995 155,1003 148,1030 160,1032 130,1045 138,1055 125,1075 108,1076 85,1095 52,1118 45,1100 30,1105')),
  str(project(N, '20,1362 60,1346 100,1344 160,1330 200,1317 260,1335 325,1357 355,1358 380,1375 400,1405 412,1450 430,1490 450,1510 480,1515 547,1502')),
  str(project(N, '20,1250 50,1252 52,1275 60,1285 60,1310 80,1325 82,1343')),
  str(project(N, '160,1330 172,1370 172,1400 180,1540'), project(E, '188,42 165,18 140,68 128,55 108,62 80,65 60,72 38,95')),
  str(project(E, '20,340 38,368 75,410 120,440 155,457 190,452 215,443 240,447 280,470 305,480')),
  str(project(S, '1050,280 1060,272 1068,278 1076,255 1074,228')),
  str(project(E, '20,190 38,205 40,220 47,235 45,250 36,265')),
];

const ROADS: [number, string][] = [
  [7, str(project(N, '38,165 80,205 150,232 260,285 360,370 440,400 510,465 575,540 640,590 700,625 745,690 775,780 850,910 862,990 850,1090 820,1200 790,1300 785,1420'), project(E, '785,-60 780,20 740,120 680,190'))],
  [6, str(project(N, '235,0 235,60 200,180 150,232 110,330 40,440'))],
  [5, str(project(N, '1460,0 1410,80 1340,115 1240,230 1180,280 1090,415 980,460 850,535 800,590 740,690'))],
  [4, str(project(N, '690,140 720,200 765,330 745,415 850,520'))],
  [5, str(project(N, '860,910 1000,890 1160,855 1300,820 1480,820 1568,800'))],
  [4, str(project(N, '930,580 1010,660 1110,740 1160,860 1150,960 1210,1150 1250,1340'))],
  [5, str(project(N, '780,1410 960,1405 1010,1360 1100,1370 1250,1340 1400,1290 1540,1230'))],
  [4, str(project(N, '1010,520 1130,505 1380,570 1440,640 1480,800 1540,920'))],
  [7, str(project(E, '680,190 680,350 570,480 495,605 440,700 350,790 345,880 365,1000 370,1130 310,1230 300,1260'))],
  [7, str(project(E, '390,595 495,605 640,630 760,710 830,800 850,900 845,1000 900,1040 1000,1080 1090,1105 1180,1110 1300,1095 1430,1070 1568,1110'))],
  [7, str(project(E, '0,1345 120,1310 190,1275 300,1240 400,1180 500,1150 620,1165 850,1160 940,1135 1050,1150 1120,1140 1180,1110'))],
  [5, str(project(E, '380,280 560,330 680,350 860,320 1020,320 1180,410 1390,490 1568,505'))],
  [4, str(project(E, '1210,240 1180,410 1160,560 1200,680 1150,830 1110,990 1030,1070'))],
  [4, str(project(E, '300,1260 380,1350 430,1440 500,1530 590,1568'))],
  [3, str(project(E, '640,660 740,750 760,850 830,920 920,1050'))],
  [3, str(project(E, '420,1265 520,1245 620,1240 720,1280 820,1310 900,1215 1000,1210 1100,1170'))],
  [3, str(project(E, '520,1245 520,1350 550,1470 590,1568'))],
  [3, str(project(E, '1470,1160 1440,1220 1330,1340 1300,1440 1260,1568'))],
  [6, str(project(S, '380,228 440,300 500,420 550,470 610,400 690,370 700,430 740,560 800,590 830,680 870,830 930,905 980,880 1040,790 1110,830 1180,885 1290,870 1350,765 1410,775 1460,710 1520,700 1568,650'))],
  [4, str(project(S, '1050,430 1060,720 1110,800 1135,1026'))],
  [4, str(project(S, '920,330 925,600 960,830 990,1026'))],
  [3, str(project(S, '10,520 100,490 130,430 200,375'))],
  [4, str(project(S, '470,260 400,460 340,700 260,870 210,1026'))],
  [4, str(project(S, '190,380 210,560 195,850 205,1026'))],
  [3, str(project(S, '10,960 60,890 110,885'))],
  [3, str(project(S, '350,1026 410,970 470,880 530,900 560,830 650,700 740,640'))],
  [3, str(project(S, '700,430 720,520 700,700 720,900 700,1026'))],
  [3, str(project(S, '1200,420 1235,600 1225,780 1250,900'))],
];
const STREAMS = [
  str(project(N, '690,0 705,100 640,170 600,190 630,240 525,250 520,320 435,350 440,400')),
  str(project(N, '955,155 975,200 965,300 1020,370 1090,415 1140,455 1250,465')),
  str(project(N, '1490,80 1400,160 1300,290 1310,340 1285,370 1310,380')),
  str(project(N, '1042,1127 1055,1230 1020,1320 960,1390 840,1415')),
  str(project(E, '560,140 600,230 650,350 700,450 690,560 600,690 530,740 480,850 440,960 440,1040 490,1120 480,1190')),
  str(project(E, '970,1280 980,1350 1020,1480 1050,1568')),
  str(project(E, '1450,1568 1455,1500 1480,1470 1560,1465')),
  str(project(S, '540,240 560,400')),
  str(project(S, '390,240 395,340 350,430 330,470 300,420 230,440 210,560 150,640 110,720')),
  str(project(S, '300,500 250,600 280,760 230,860 250,900 225,1026')),
  str(project(S, '640,400 650,500 690,560 700,760 690,880 720,1026')),
];

/* Deterministic scatter of woodland patches and lanes. */
const rng = (seed: number) => () => ((seed = (seed * 16807) % 2147483647) / 2147483647);
const blob = (r: () => number, cx: number, cy: number, size: number) =>
  Array.from({ length: 17 }, (_, i) => {
    const a = (i / 17) * Math.PI * 2;
    const d = size * (0.35 + r() * 0.85);
    return `${(cx + Math.cos(a) * d * 1.2).toFixed(0)},${(cy + Math.sin(a) * d).toFixed(0)}`;
  }).join(' ');
const r1 = rng(90210);
const WOODS = Array.from({ length: 330 }, () => blob(r1, 788 + r1() * 2236, 380 + r1() * 1522, 6 + r1() * 28));
const LANES = Array.from({ length: 260 }, () => {
  let x = 788 + r1() * 2236, y = 380 + r1() * 1522, a = r1() * 6.28;
  return Array.from({ length: 8 }, () => {
    a += (r1() - 0.5) * 1.1; x += Math.cos(a) * 22; y += Math.sin(a) * 22;
    return `${x.toFixed(0)},${y.toFixed(0)}`;
  }).join(' ');
});

const CYAN = '#5fdde6', BLUE = '#4363e0', GOLD = '#c9a02f', PINK = '#dd3f87';
const SCHOOLS: [string, [number, number][]][] = [
  [CYAN, project(N, '133,441 333,483 151,610 118,679 66,700 95,723 333,741 299,808 372,829 585,685 511,733 571,737 609,721 653,755 567,848 631,842 624,883 459,858 507,900 476,936 339,924 535,951 532,958 759,936 786,1029 457,1002 391,997 507,1050 599,1052 644,1069 565,1077 505,1081 544,1116 509,1133 457,1153 455,1184 453,1192 225,854 218,852 155,900 66,904 247,914 239,945 106,944 127,960 164,966 135,1000 189,1011 208,1035 243,1029 299,1025 264,1054 64,1040 102,1046 147,1046 220,1079 185,1094 287,1100 309,1102 262,1129 372,1137 83,1140 239,1168 266,1174 195,1180 145,1187 361,1178 295,1211 345,1227 374,1227 40,1187 536,1250 478,1281 515,1319 172,1351 137,1368 174,1385 151,1403 62,1421 133,1448 157,1465 229,1468 245,1469 332,1475 66,1507 83,1524 141,1518 41,1507 963,621 852,668 896,706 1087,910 861,1312 825,1372 755,1414 894,1471')],
  [CYAN, project(E, '230,28 64,38 49,46 38,32 283,67 472,66 195,126 247,142 104,146 120,174 204,168 320,187 241,221 41,231 118,283 122,336 58,344 220,342 145,408 110,597 183,716 636,121 633,187 521,228 709,301 563,312 407,334 441,436 459,562 420,588 368,629 445,963 268,997')],
  [CYAN, project(S, '1025,232 738,378 770,375 897,393 840,467 896,450 743,480 650,604 643,615 1077,312 1149,324 1232,303 1194,330 1132,444 1196,528 1429,548 1065,860 1093,855 1362,820 904,283')],
  [BLUE, project(N, '837,503 967,530 904,547 320,685 577,689 634,681 391,776 577,992 699,1035 139,1109 103,1240 889,1240 713,1353 803,1345 861,1343 1033,1399 975,1444 647,1504 834,1554 191,1438 268,1484 324,1477 291,1528 393,1560')],
  [BLUE, project(E, '291,4 393,32 164,60 326,61 431,76 391,90 350,88 347,91 312,100 102,99 210,109 297,157 370,169 411,182 87,237 143,239 210,272 266,277 99,299 110,301 461,249 632,261 684,245 703,249 501,348 419,359 413,362 112,474 151,497 52,509 127,551 210,597 166,623 85,647 172,655 166,674 75,760 77,798 79,850 403,527')],
  [BLUE, project(S, '905,270 943,288 1160,235 1044,333 1138,338 1110,360 1205,405 1273,360 1228,525 1189,609 1054,912 1422,312 1454,320 1483,315')],
  [GOLD, project(N, '748,416 910,562 757,610 1083,730 403,627 513,712 312,780 402,858 395,853 376,893 179,911 472,984 690,1031 166,1025 257,1071 179,1088 297,1161 487,1163 264,1207 459,1258 116,1285 162,1366 137,1392 139,1413 220,1451 103,1477 351,1562 1150,1066 1191,1331 841,1361')],
  [GOLD, project(E, '181,94 256,109 110,128 183,134 46,161 351,36 393,187 60,237 172,407 193,559 536,193 643,197 547,228 767,251 501,486 414,543 387,571 595,712 139,1126 320,1258 241,1349 0,1373')],
  [GOLD, project(S, '634,232 828,258 957,305 769,426 723,488 701,503 908,576 1120,408 1198,525 1299,587 1135,692 1229,735 1516,728 1359,821 1417,884')],
  [PINK, project(N, '649,674 52,956 125,1258 893,1518')],
  [PINK, project(E, '181,414')],
];

const PLACES: [Sheet, number, number, string, boolean?][] = [
  [N, 648, 30, 'Chipping Ongar'], [N, 85, 122, 'epping'], [N, 1235, 264, 'Ingatestone'], [N, 1388, 537, 'Billericay'], [N, 900, 611, 'Brentwood'],
  [N, 412, 919, 'Romford', true], [N, 842, 1331, 'South'], [N, 842, 1362, 'Ockendon'], [N, 1428, 1267, 'Stanford-le-'], [N, 1428, 1299, 'Hope'],
  [N, 1018, 1548, 'Grays'], [N, 1512, 1550, 'River Th'], [N, 415, 1475, 'River Thames', true], [E, 1195, 111, 'Tilbury'], [E, 1072, 243, 'Northfleet'],
  [E, 1222, 243, 'Gravesend'], [E, 588, 251, 'Dartford'], [E, 295, 135, 'Bexleyheath', true], [E, 105, 382, 'Sidcup', true], [E, 178, 427, 'Foots Cray', true],
  [E, 430, 570, 'Swanley'], [E, 134, 675, 'Orpington', true], [E, 1515, 962, 'Snodl'], [E, 1418, 1186, 'West Malling'], [E, 512, 1366, 'Sevenoaks'],
  [S, 233, 367, 'Woking'], [S, 527, 254, 'Cobham'], [S, 698, 575, 'Leatherhead'], [S, 965, 282, 'Banstead'], [S, 1087, 310, 'Coulsdon', true],
  [S, 1258, 398, 'Warlingham'], [S, 1216, 667, 'Caterham'], [S, 1368, 898, 'Oxted'], [S, 1520, 785, 'Westerham'], [S, 1437, 320, 'Biggin Hill', true],
];

const RIVER = str(project(E, '570,-25 620,10 680,50 740,85 790,125 840,142 880,125 920,85 970,62 1010,75 1040,120 1070,170 1120,192 1200,200 1350,207 1440,190 1520,150'));
const LOWER = str(project(N, '30,1345 100,1318 150,1305 200,1296 260,1310 330,1330 390,1350 425,1400 445,1460 470,1490 520,1500 600,1520'));

const MapCanvas = () => (
  <svg width="2235" height="1522" viewBox="788 380 2235 1522">
    <rect x="788" y="380" width="2235" height="1522" fill="#fafaf8" />
    <g fill="#f5f5f3">
      <ellipse cx="2700" cy="640" rx="80" ry="40" /><ellipse cx="2950" cy="840" rx="70" ry="80" /><ellipse cx="2850" cy="1270" rx="80" ry="60" />
      <ellipse cx="2580" cy="1240" rx="60" ry="50" /><ellipse cx="2500" cy="1770" rx="50" ry="60" /><ellipse cx="1010" cy="1700" rx="80" ry="60" />
    </g>
    <g fill="#eef3ef">{WOODS.map((w, i) => <polygon key={i} points={w} />)}</g>
    <g fill="none" stroke="#f1f1ef" strokeWidth="2">{LANES.map((l, i) => <polyline key={i} points={l} />)}</g>
    <g fill="none" stroke="#dbe3e8" strokeWidth="2">{STREAMS.map((l, i) => <polyline key={i} points={l} />)}</g>
    <polyline points={RIVER} fill="none" stroke="#d3d9dc" strokeWidth="29" strokeLinejoin="round" />
    <polygon points={str(project(E, '1340,170 1440,150 1490,110 1490,0 1500,-60 1505,-100 1568,-110 1568,130 1510,190 1440,205'))} fill="#d3d9dc" />
    <g fill="none" stroke="#ebebe9" strokeLinejoin="round">{ROADS.map(([w, l], i) => <polyline key={i} points={l} strokeWidth={w + 1} />)}</g>
    <g fill="none" stroke="#fff" strokeLinejoin="round">{ROADS.map(([w, l], i) => <polyline key={i} points={l} strokeWidth={w - 1} />)}</g>
    <g fill="none" stroke="#f2d5d5" strokeWidth="2" strokeDasharray="3 5">
      <polyline points={str(project(N, '960,962 1080,942 1280,945 1295,1000 1420,1000 1440,1080 1500,1060 1560,1030'))} />
      <polyline points={str(project(E, '1560,570 1490,570 1440,660 1400,780 1355,850 1390,860 1400,835 1500,840 1555,868'))} />
    </g>
    <g fill="#ebd082" stroke="#5a4f38" strokeWidth="2" strokeLinejoin="round">
      <polygon points={BOROUGHS} /><polygon points={COULSDON} /><polygon points={CHESSINGTON} />
    </g>
    <clipPath id="boro"><polygon points={BOROUGHS} /></clipPath>
    <g clipPath="url(#boro)" fill="none">
      <g stroke="#e8cd80" strokeWidth="2">{LANES.map((l, i) => <polyline key={i} points={l} />)}</g>
      <g stroke="#edd388" strokeWidth="3">{ROADS.slice(0, 7).map(([, l], i) => <polyline key={i} points={l} />)}</g>
      <polyline points={str(project(N, '280,880 390,800 530,795 600,765 700,720'))} stroke="#efd892" strokeWidth="3" />
      <polyline points={LOWER} stroke="#d9bf76" strokeWidth="19" strokeLinejoin="round" />
    </g>
    <g fill="none" stroke="#4f4632" strokeWidth="2" strokeLinejoin="round">{INNER.map((l, i) => <polyline key={i} points={l} />)}</g>
    <g fontFamily="Lato, Noto Sans, sans-serif" fontSize="16" fontWeight="700" textAnchor="middle" letterSpacing="0.4">
      {PLACES.map(([s, x, y, t, inside]) => {
        const [[px, py]] = project(s, `${x},${y}`);
        return <text key={t} x={px} y={py} fill={inside ? '#b7a56d' : '#8f9db2'} stroke={inside ? 'none' : '#fafaf8'} strokeWidth="2.5" paintOrder="stroke">{t}</text>;
      })}
    </g>
    {SCHOOLS.map(([c, pts], i) => (
      <g key={i} fill={c} stroke="#56646a" strokeWidth="1.5">
        {pts.map(([x, y], j) => <circle key={j} cx={x} cy={y} r="4.8" />)}
      </g>
    ))}
  </svg>
);

const MapColumn = styled.div`
  display: flex;
  flex-direction: column;
  width: 2236px;
  margin-left: 13px;
  padding-top: 3px;
`;
const MapFrame = styled.div`
  height: 1523px;
  border-left: 1px solid #b5b5b5;
  border-bottom: 2px solid #b0b0b0;
  overflow: hidden;
`;
const MessageBar = styled.div`
  flex: none;
  display: flex;
  align-items: center;
  justify-content: flex-end;
  height: 72px;
  padding-right: 45px;
  border: 2px solid #dfa835;
  background: #ffc845;
`;
const Closer = styled.span`
  display: flex;
  align-items: center;
  justify-content: center;
  width: 34px;
  height: 34px;
  margin: 0 0 4px 68px;
  border-radius: 50%;
  background: #2b220d;
`;

/* ------------------------------------------------------------------ */
/* Status bar                                                           */
/* ------------------------------------------------------------------ */

const Status = styled.div`
  flex: none;
  display: flex;
  align-items: center;
  height: 61px;
  padding: 2px 0 0 8px;
`;
const StatusText = styled(Label)`
  font-size: ${p => p.$size ?? 22}px;
  color: #1a1a1a;
`;
const Locator = styled.span`
  flex: none;
  display: flex;
  align-items: center;
  gap: 16px;
  width: 428px;
  height: 47px;
  padding-left: 16px;
  border: 2px solid #ababab;
  border-radius: 5px;
  background: #fff;
  color: #7d7d7d;
  font-size: 25px;
`;
const StatusFields = styled.span`
  display: contents;
  font-size: 23px;
`;

const StatusBar = () => (
  <Status>
    <Locator><Icon name="search" size={24} />Type to locate (⌘K)</Locator>
    <StatusText $w={850} $ml={16} $size={23} $ls={-0.25}>Toggles the editing state of the current layer</StatusText>
    <StatusText $w={114} $ls={-0.35}>Coordinate</StatusText>
    <StatusFields>
      <Field $w={203} $h={44} $ml={8}><Value $pl={15}>489754,172213</Value></Field>
      <Slot $w={48}><Icon name="mouse" size={30} /></Slot>
      <StatusText $w={58} $ml={18} $ls={-0.35}>Scale</StatusText>
      <Combo w={184} h={47} ml={7} text="1:393660" dropW={41} />
      <Slot $w={76}><Icon name="lock" size={30} /></Slot>
      <StatusText $w={98} $ml={-8} $ls={-0.2}>Magnifier</StatusText>
      <SpinBox w={181} h={45} ml={8} text="100%" />
      <StatusText $w={90} $ml={19} $ls={-0.2}>Rotation</StatusText>
      <SpinBox w={184} h={45} ml={16} text="0.0 °" />
    </StatusFields>
    <Check on ml={14} />
    <StatusText $w={74} $ml={10} $ls={-0.2}>Render</StatusText>
    <Slot $w={30} />
    <Slot $w={36}><Icon name="globe" size={31} /></Slot>
    <StatusText $w={134} $ls={0.1}>EPSG:27700</StatusText>
    <Slot $w={126}><Icon name="chat" size={32} /></Slot>
  </Status>
);

/* ------------------------------------------------------------------ */
/* Layer properties window                                              */
/* ------------------------------------------------------------------ */

const WindowShadow = styled.div`
  position: absolute;
  left: 638px;
  top: 120px;
  width: 1650px;
  height: 1516px;
  border-radius: 20px;
  box-shadow: 0 0 2px 1px rgba(0, 0, 0, 0.28), 0 36px 80px rgba(0, 0, 0, 0.55);
`;
const Window = styled.div`
  position: absolute;
  left: 638px;
  top: 120px;
  width: 1650px;
  height: 1516px;
  display: flex;
  flex-direction: column;
  overflow: hidden;
  border-radius: 20px;
  background: #ececec;
  color: #000;
`;
const TitleBar = styled.div`
  flex: none;
  display: grid;
  grid-template-columns: 200px 1fr 200px;
  align-items: center;
  height: 57px;
  padding-bottom: 1px;
  border-bottom: 1px solid #c9c5ca;
  background: #f7f3f8;
  text-align: center;
  color: #454247;
`;
const Lights = styled.div`display: flex; gap: 16px; padding-left: 16px;`;
const Light = styled.i<{ $c: string; $b: string }>`
  width: 24px;
  height: 24px;
  border-radius: 50%;
  background: ${p => p.$c};
  border: 1px solid ${p => p.$b};
`;
const WindowBody = styled.div`flex: 1; display: flex; min-height: 0;`;
const Side = styled.div`flex: none; display: flex; flex-direction: column; width: 299px; background: #5c5c5c;`;
const SideSearch = styled.div`
  flex: none;
  display: flex;
  align-items: center;
  height: 47px;
  margin-bottom: 12px;
  padding-left: 16px;
  border: 2px solid #7da2c8;
  border-radius: 0 0 4px 4px;
  background: #fff;
`;
const SideScroll = styled.div`display: flex; flex: 1; min-height: 0;`;
const SideList = styled.div`width: 272px; overflow: hidden;`;
const SideItem = styled.div<{ $on?: boolean; $h?: number }>`
  display: flex;
  align-items: center;
  height: ${p => p.$h ?? 72}px;
  padding-left: ${p => (p.$on ? 14 : 9)}px;
  background: ${p => (p.$on ? '#ececec' : 'transparent')};
  color: ${p => (p.$on ? '#000' : '#fff')};
  font-size: 25px;
  line-height: 30px;
  letter-spacing: -0.45px;
  gap: 16px;
`;
const Pre = styled.span`white-space: pre-line; padding-top: 2px;`;
const ScrollBar = styled.div`
  display: flex;
  flex-direction: column;
  width: 27px;
  border-left: 2px solid #bdbdbd;
  background: linear-gradient(90deg, #fff, #f0f0f0);
`;
const ScrollEnd = styled.div<{ $h: number }>`
  display: flex;
  align-items: center;
  justify-content: center;
  height: ${p => p.$h}px;
  border-bottom: 2px solid ${p => (p.$h === 27 ? '#c8c8c8' : 'transparent')};
`;
const Thumb = styled.div`height: 129px; margin-top: auto; border: 2px solid #bcbcbc; border-left: 0; background: #e2e2e2;`;

const SIDE: [string, string][] = [
  ['info', 'Information'], ['source', 'Source'], ['styling', 'Symbology'], ['labels', 'Labels'], ['masks', 'Masks'], ['cube', '3D View'],
  ['diagrams', 'Diagrams'], ['fields', 'Fields'], ['form', 'Attributes Form'], ['joins', 'Joins'], ['aux', 'Auxiliary\nStorage'], ['actions', 'Actions'],
  ['display', 'Display'], ['rendering', 'Rendering'], ['clock', 'Temporal'], ['variables', 'Variables'], ['metadata', 'Metadata'],
  ['deps', 'Dependencies'], ['legend', 'Legend'], ['server', 'QGIS Server'],
];

const Content = styled.div`
  flex: 1;
  display: flex;
  flex-direction: column;
  padding: 0 6px 6px 9px;
`;
const Row = styled.div<{ $h: number; $pl?: number; $pt?: number }>`
  flex: none;
  display: flex;
  align-items: center;
  height: ${p => p.$h}px;
  padding: ${p => p.$pt ?? 0}px 0 0 ${p => p.$pl ?? 0}px;
`;
const Options = styled.div`flex: none; padding-top: 9px;`;
const Footer = styled.div`flex: none; display: flex; margin-top: auto; padding-left: 1px;`;
const StyleButton = styled(PushButton)`justify-content: flex-end; padding-right: 6px;`;
const StyleLabel = styled.span`margin-right: 39px;`;
const Group = styled.div<{ $h: number; $pt: number }>`
  flex: none;
  height: ${p => p.$h}px;
  margin-left: 2px;
  padding-top: ${p => p.$pt}px;
  border: 2px solid #d5d5d5;
  border-radius: 3px;
  background: #e8e8e8;
`;
const MiniButton = styled.span<{ $w: number; $ml: number }>`
  flex: none;
  display: flex;
  align-items: center;
  justify-content: center;
  width: ${p => p.$w}px;
  height: 46px;
  margin-left: ${p => p.$ml}px;
  border: 2px solid #ababab;
  border-radius: 4px;
  background: linear-gradient(#fdfdfd, #ececec);
`;
const Mnemonic = styled.u`text-decoration-thickness: 2px; text-underline-offset: 4px; text-decoration-skip-ink: none;`;

const Annotation = styled.div<{ $x: number; $y: number; $w: number; $h: number }>`
  position: absolute;
  left: ${p => p.$x}px;
  top: ${p => p.$y}px;
  width: ${p => p.$w}px;
  height: ${p => p.$h}px;
  border: 13px solid #7b1d0f;
  border-radius: 30px;
`;

const PropertiesWindow = () => (
  <Window>
    <TitleBar>
      <Lights><Light $c="#ed6a5e" $b="#d5574b" /><Light $c="#dcd8dd" $b="#c6c2c7" /><Light $c="#61c454" $b="#4fae43" /></Lights>
      <Label $bold $ls={0.1}>Layer Properties — CycleRoutes — Rendering</Label>
    </TitleBar>
    <WindowBody>
      <Side>
        <SideSearch><Icon name="search" size={25} /></SideSearch>
        <SideScroll>
          <SideList>
            {SIDE.map(([icon, text]) => (
              <SideItem key={text} $on={icon === 'rendering'} $h={icon === 'aux' ? 76 : 72}>
                <Icon name={icon} size={icon === 'rendering' ? 46 : 49} />
                <Pre>{text}</Pre>
              </SideItem>
            ))}
          </SideList>
          <ScrollBar>
            <ScrollEnd $h={27}><Triangle $dir="up" $s={8} /></ScrollEnd>
            <Thumb />
            <ScrollEnd $h={28}><Triangle $dir="down" $s={8} /></ScrollEnd>
          </ScrollBar>
        </SideScroll>
      </Side>
      <Content>
        <Row $h={46} $pl={5}>
          <Triangle $dir="down" $s={10.5} $h={14} />
          <Check on ml={14} />
          <Label $bold $ml={22}>Scale Dependen<Mnemonic>t</Mnemonic> Visibility</Label>
        </Row>
        <Group $h={136} $pt={14}>
          <Row $h={42} $pt={1} $pl={20}><Label $w={650}>Minimum (exclusive)</Label><Label>Maximum (inclusive)</Label></Row>
          <Row $h={62} $pl={20}>
            <Icon name="zoomOut" size={46} />
            <Combo w={492} ml={14} text="1:60000" />
            <MiniButton $w={47} $ml={13}><Icon name="mapPick" size={29} /></MiniButton>
            <MiniButton $w={23} $ml={2}><Triangle $dir="down" $s={8} /></MiniButton>
            <Slot $w={13} />
            <Icon name="zoomIn" size={46} />
            <Combo w={492} ml={14} text="0" />
            <MiniButton $w={47} $ml={13}><Icon name="mapPick" size={29} /></MiniButton>
            <MiniButton $w={23} $ml={2}><Triangle $dir="down" $s={8} /></MiniButton>
          </Row>
        </Group>
        <Row $h={54} $pl={2} $pt={9}><Check on /><Label $bold $ml={20}>Simplify <Mnemonic>G</Mnemonic>eometry</Label></Row>
        <Group $h={314} $pt={8}>
          <Row $h={54} $pt={1} $pl={20}><Label $bold $ls={-0.1}>Note:</Label><Label $ml={7} $ls={-0.25}>Feature simplification may speed up rendering but can result in rendering inconsistencies</Label></Row>
          <Row $h={54} $pt={1} $pl={23}><Label $w={943}>Simplification threshold (higher values result in more simplification)</Label><SpinBox w={201} h={46} text="1.00" floor /><Label $ml={16}>pixels</Label></Row>
          <Row $h={66} $pt={1} $pl={23}>
            <Label $w={943}>Simplification algorithm</Label>
            <Field $w={201} $h={47} $shade><Value>Distance</Value><Drop $w={42} $plain><Triangle $dir="down" $s={8} /></Drop></Field>
          </Row>
          <Row $h={50} $pt={2} $pl={19}><Check dim /><Label $dim $ml={11}>Simplify on provider side if possible (Not supported)</Label></Row>
          <Row $h={66} $pt={1} $pl={23}><Label $w={943}>Maximum scale at which the layer should be simplified (1:1 always simplifies)</Label><Combo w={201} h={47} text="1:1" dropW={41} /></Row>
        </Group>
        <Options>
          <Row $h={54}><Check /><Label $ml={11}>Force layer to render as a raster (may result in smaller export file sizes)</Label></Row>
          <Row $h={62}><Check /><Label $ml={11} $w={439}>Refresh layer at interval (seconds)</Label><SpinBox w={341} h={46} text="0.00" dim floor /></Row>
          <Row $h={62}><Check /><Label $ml={11} $w={363}>Refresh layer on notification</Label><Check dim /><Label $dim $ml={11} $w={245}>Only if message is</Label><Field $w={632} $h={47} /></Row>
        </Options>
        <Footer>
          <PushButton>Help</PushButton>
          <StyleButton $ml={12}><StyleLabel>Style</StyleLabel><Triangle $dir="down" $s={6} /></StyleButton>
          <PushButton $ml={13}>Apply</PushButton>
          <PushButton $ml={501}>Cancel</PushButton>
          <PushButton $ml={13} $primary>OK</PushButton>
        </Footer>
      </Content>
    </WindowBody>
  </Window>
);

export default function App() {
  return (
    <Page>
      <Global />
      <Notch />
      <TopBars />
      <Main>
        <Docks />
        <MapColumn>
          <MessageBar>
            <PushButton>Details</PushButton>
            <Closer><svg width="18" height="20" viewBox="0 0 18 20"><path d="m3 3 12 14M15 3 3 17" stroke="#fff8e0" strokeWidth="4" strokeLinecap="round" /></svg></Closer>
          </MessageBar>
          <MapFrame><MapCanvas /></MapFrame>
        </MapColumn>
      </Main>
      <StatusBar />
      <WindowShadow />
      <PropertiesWindow />
      <Annotation $x={939} $y={158} $w={502} $h={75} />
      <Annotation $x={931} $y={261} $w={697} $h={121} />
      <Annotation $x={593} $y={1152} $w={356} $h={120} />
    </Page>
  );
}
